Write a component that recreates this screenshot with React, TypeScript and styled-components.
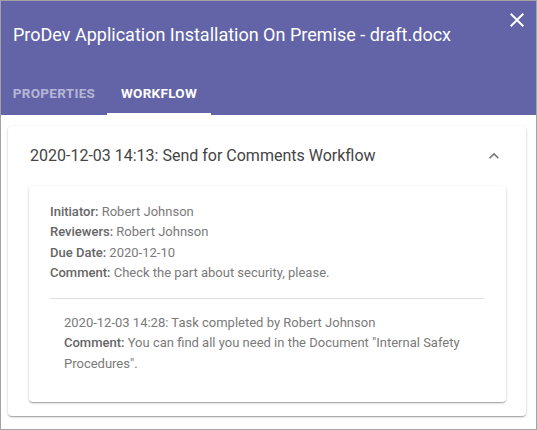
import React from 'react';
import styled, { createGlobalStyle } from 'styled-components';

const GlobalStyle = createGlobalStyle`
  body {
    margin: 0;
    font-family: Roboto, "Liberation Sans", sans-serif;
  }
`;

const Frame = styled.div`
  width: 537px;
  height: 430px;
  box-sizing: border-box;
  border: 1px solid #a3a3a3;
  background: #fff;
  display: flex;
  flex-direction: column;
`;

const Header = styled.div`
  background: #6264a7;
  height: 114px;
  display: flex;
  flex-direction: column;
  justify-content: space-between;
  flex-shrink: 0;
`;

const TitleRow = styled.div`
  display: flex;
  align-items: flex-start;
  justify-content: space-between;
  padding: 0 7px 0 12px;
`;

const Title = styled.h1`
  margin: 23px 0 0;
  color: #fff;
  font-size: 18px;
  font-weight: 400;
  line-height: 22px;
`;

const CloseButton = styled.button`
  margin-top: 7px;
  width: 24px;
  height: 24px;
  padding: 0;
  border: 0;
  background: none;
  color: #fff;
  cursor: pointer;
  svg {
    display: block;
  }
`;

const Tabs = styled.div`
  display: flex;
`;

const Tab = styled.div<{ $active?: boolean; $width: number }>`
  width: ${(p) => p.$width}px;
  height: 44px;
  box-sizing: border-box;
  display: flex;
  align-items: center;
  justify-content: center;
  padding-top: 2px;
  font-size: 13.5px;
  font-weight: 700;
  letter-spacing: 0.3px;
  color: ${(p) => (p.$active ? '#fff' : 'rgba(255,255,255,0.55)')};
  border-bottom: 2px solid ${(p) => (p.$active ? '#fff' : 'transparent')};
`;

const Body = styled.div`
  padding: 11px 10px 0 7px;
`;

const Card = styled.div`
  background: #fff;
  border-radius: 4px;
  box-shadow: 0 1px 3px rgba(0, 0, 0, 0.2), 0 1px 1px rgba(0, 0, 0, 0.14),
    0 2px 1px -1px rgba(0, 0, 0, 0.12);
  padding: 0 20px 14px 21px;
`;

const CardHeader = styled.div`
  height: 60px;
  display: flex;
  align-items: center;
  justify-content: space-between;
  padding-left: 1px;
`;

const CardTitle = styled.div`
  font-size: 16px;
  color: #444;
  padding-bottom: 2px;
`;

const Chevron = styled.div`
  color: #757575;
  margin-right: 2px;
  svg {
    display: block;
  }
`;

const Details = styled.div`
  border-radius: 4px;
  box-shadow: 0 1px 3px rgba(0, 0, 0, 0.2), 0 1px 1px rgba(0, 0, 0, 0.14),
    0 2px 1px -1px rgba(0, 0, 0, 0.12);
  padding: 16px 22px 28px 21px;
  font-size: 13px;
  line-height: 20.3px;
  color: #7a7a7a;
`;

const Line = styled.div``;

const Label = styled.b`
  font-weight: 500;
  color: #666;
`;

const Divider = styled.hr`
  border: 0;
  border-top: 1px solid #e0e0e0;
  margin: 15px 0 14px;
`;

const Task = styled.div`
  padding-left: 14px;
`;

export default function App() {
  return (
    <>
      <GlobalStyle />
      <Frame>
        <Header>
          <TitleRow>
            <Title>ProDev Application Installation On Premise - draft.docx</Title>
            <CloseButton aria-label='close'>
              <svg width='24' height='24' viewBox='0 0 24 24' fill='currentColor'>
                <path d='M19 6.41 17.59 5 12 10.59 6.41 5 5 6.41 10.59 12 5 17.59 6.41 19 12 13.41 17.59 19 19 17.59 13.41 12z' />
              </svg>
            </CloseButton>
          </TitleRow>
          <Tabs>
            <Tab $width={106}>PROPERTIES</Tab>
            <Tab $width={104} $active>
              WORKFLOW
            </Tab>
          </Tabs>
        </Header>
        <Body>
          <Card>
            <CardHeader>
              <CardTitle>2020-12-03 14:13: Send for Comments Workflow</CardTitle>
              <Chevron>
                <svg width='20' height='20' viewBox='0 0 24 24' fill='currentColor'>
                  <path d='M12 8l-6 6 1.41 1.41L12 10.83l4.59 4.58L18 14z' />
                </svg>
              </Chevron>
            </CardHeader>
            <Details>
              <Line>
                <Label>Initiator:</Label> Robert Johnson
              </Line>
              <Line>
                <Label>Reviewers:</Label> Robert Johnson
              </Line>
              <Line>
                <Label>Due Date:</Label> 2020-12-10
              </Line>
              <Line>
                <Label>Comment:</Label> Check the part about security, please.
              </Line>
              <Divider />
              <Task>
                <Line>2020-12-03 14:28: Task completed by Robert Johnson</Line>
                <Line>
                  <Label>Comment:</Label> You can find all you need in the Document "Internal Safety
                  Procedures".
                </Line>
              </Task>
            </Details>
          </Card>
        </Body>
      </Frame>
    </>
  );
}
